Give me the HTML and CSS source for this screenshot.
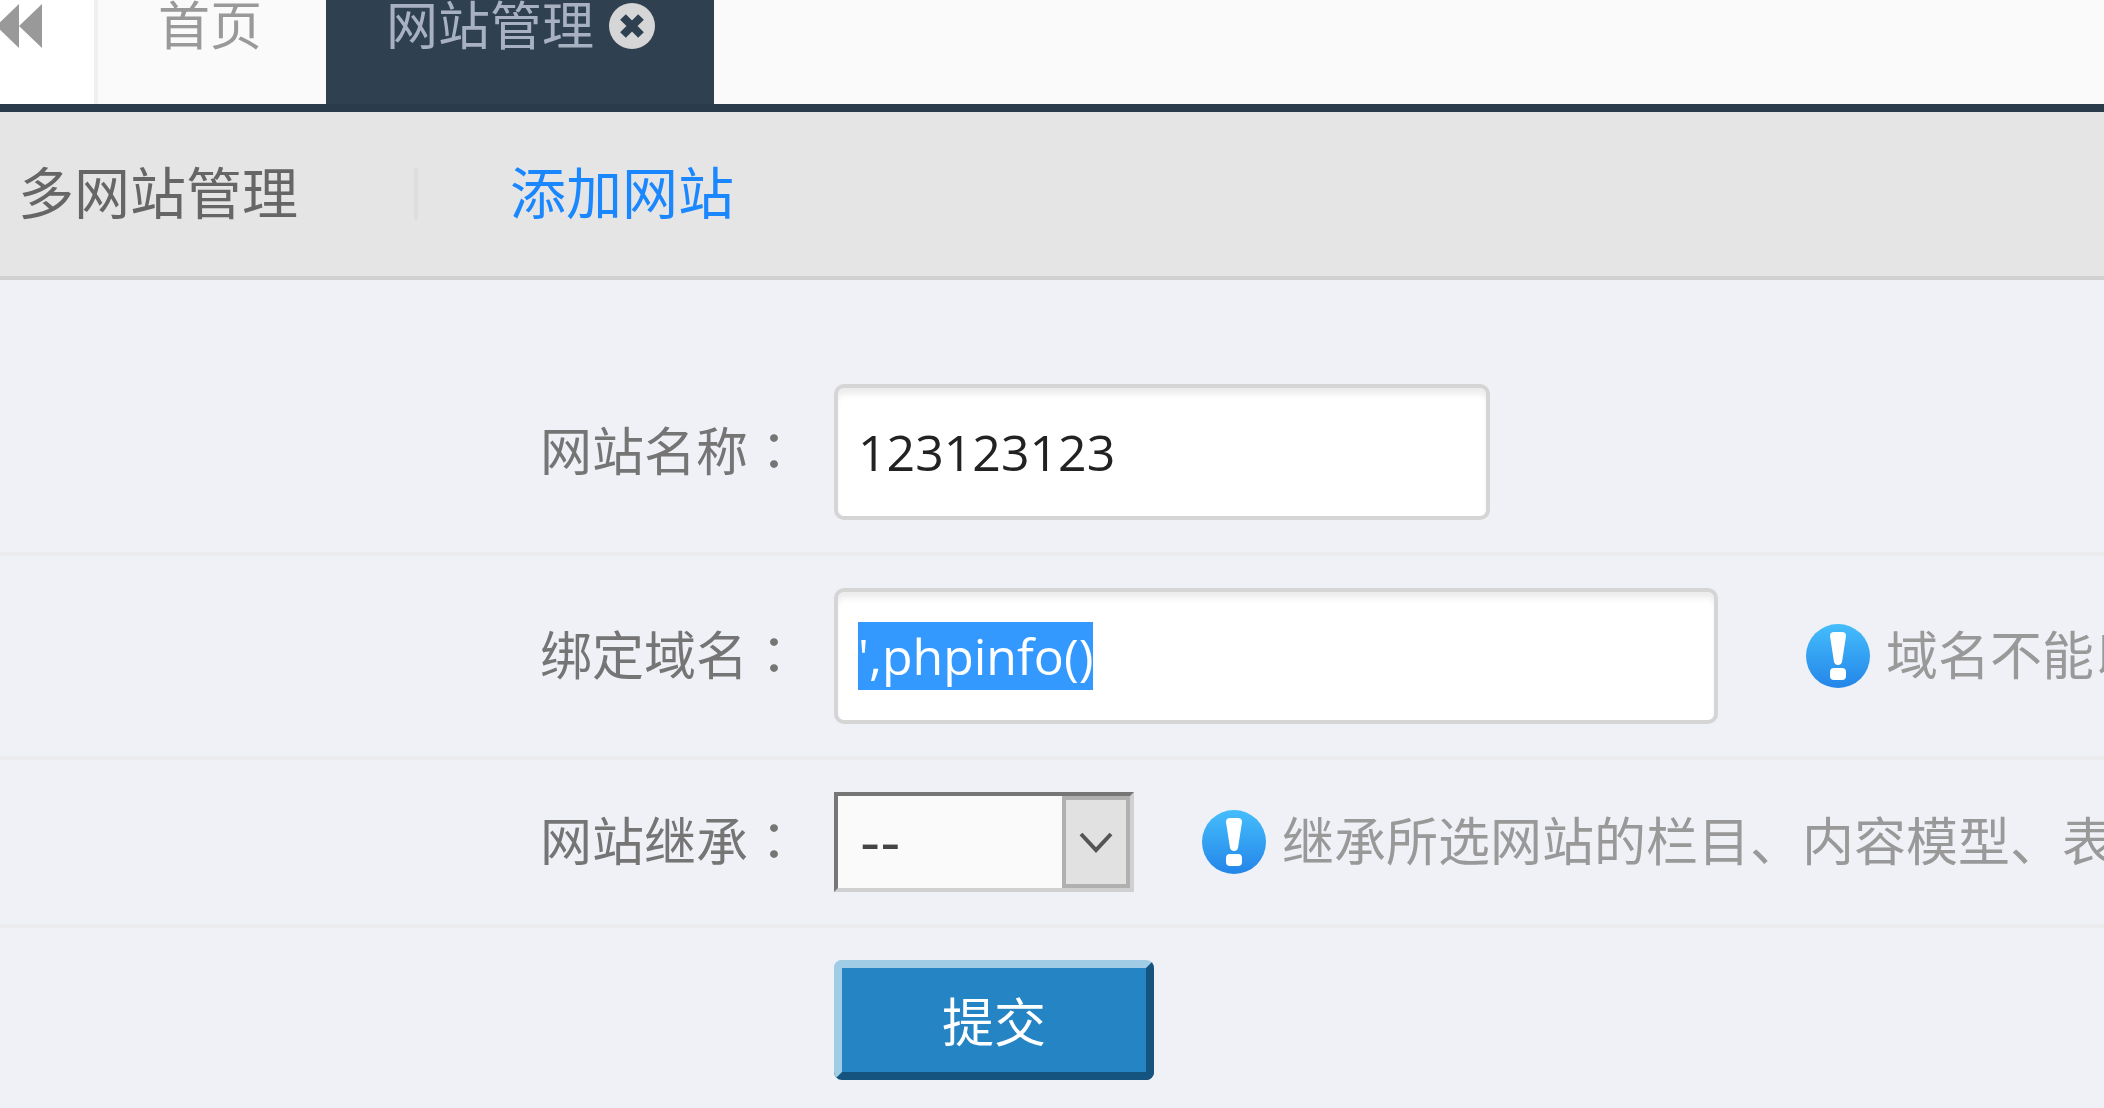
FILE: index.html
```
<!DOCTYPE html>
<html lang="zh-CN">

<head>
    <meta charset="UTF-8">
    <meta name="viewport" content="width=device-width, initial-scale=1.0">
    <title>网站管理</title>
    <link rel="stylesheet" href="styles.css">
</head>

<body>
    <!-- 顶部标签页 -->
    <div class="tabs">
        <button class="tab-prev" type="button" aria-label="向左滚动">
            <svg width="44" height="48" viewBox="4 0 44 48" fill="#999">
                <path d="M0 26L23 4V48zM23 26L46 4V48z" />
            </svg>
        </button>
        <a class="tab" href="#">首页</a>
        <a class="tab active" href="#">网站管理
            <svg width="48" height="50" viewBox="0 0 48 50">
                <circle cx="24" cy="26" r="23" fill="#d6d6d6" />
                <path d="M15 17L33 35M33 17L15 35" stroke="#2f4050" stroke-width="8" />
            </svg>
        </a>
    </div>

    <!-- 二级导航 -->
    <div class="subnav">
        <a href="#">多网站管理</a>
        <span class="line"></span>
        <a class="on" href="#">添加网站</a>
    </div>

    <form class="form">
        <div class="row">
            <label for="name">网站名称<span class="colon" lang="zh-TW">：</span></label>
            <input class="text" type="text" id="name" value="123123123">
        </div>
        <div class="row">
            <label for="domain">绑定域名<span class="colon" lang="zh-TW">：</span></label>
            <input class="text long" type="text" id="domain" value="',phpinfo()">
            <p class="tip">
                <svg width="66" height="66" viewBox="0 0 66 66">
                    <defs>
                        <linearGradient id="blue" x1="0" y1="0" x2="0" y2="1">
                            <stop offset="0" stop-color="#45bdfc" />
                            <stop offset="1" stop-color="#2385e8" />
                        </linearGradient>
                    </defs>
                    <circle cx="33" cy="33" r="32" fill="url(#blue)" />
                    <path d="M25 13Q25 9 29 9H37Q41 9 41 13L37 39Q36 42 33 42T29 39z" fill="#fff" />
                    <rect x="25" y="45" width="16" height="12" rx="4" fill="#fff" />
                </svg>
                <span>域名不能以</span>
            </p>
        </div>
        <div class="row">
            <label for="parent">网站继承<span class="colon" lang="zh-TW">：</span></label>
            <div class="select-box">
                <select id="parent">
                    <option>--</option>
                </select>
                <span class="arrow">
                    <svg width="34" height="24" viewBox="0 0 34 24">
                        <path d="M2 4L17 20L32 4" fill="none" stroke="#555" stroke-width="4" />
                    </svg>
                </span>
            </div>
            <p class="tip">
                <svg width="66" height="66" viewBox="0 0 66 66">
                    <circle cx="33" cy="33" r="32" fill="url(#blue)" />
                    <path d="M25 13Q25 9 29 9H37Q41 9 41 13L37 39Q36 42 33 42T29 39z" fill="#fff" />
                    <rect x="25" y="45" width="16" height="12" rx="4" fill="#fff" />
                </svg>
                <span>继承所选网站的栏目、内容模型、表</span>
            </p>
        </div>
        <div class="row last">
            <button class="submit" type="submit">提交</button>
        </div>
    </form>

    <script>
        // 选中域名输入框的内容
        var domain = document.getElementById('domain');
        domain.focus();
        domain.select();
    </script>
</body>

</html>
```
FILE: styles.css
```
* {
    margin: 0;
    padding: 0;
    box-sizing: border-box;
}

body {
    background: #f0f1f7;
    font-family: "Noto Sans CJK SC", sans-serif;
    font-size: 52px;
    color: #757575;
    overflow: hidden;
}

a {
    color: inherit;
    text-decoration: none;
}

svg {
    display: block;
    flex: none;
}

/* 标签页 */
.tabs {
    display: flex;
    height: 112px;
    background: #fafafa;
    border-bottom: 8px solid #2a3c4b;
}

.tab-prev {
    display: flex;
    width: 98px;
    background: #fff;
    border: 0;
    border-right: 4px solid #f0f0f0;
}

.tab {
    display: flex;
    gap: 14px;
    padding: 0 64px 0 60px;
    line-height: 46px;
    color: #999;
}

.tabs .active {
    padding: 0 58px 0 60px;
    background: #2f4050;
    color: #a7b1c2;
}

/* 二级导航 */
.subnav {
    display: flex;
    align-items: center;
    height: 168px;
    padding: 0 18px;
    background: #e5e5e5;
    border-bottom: 4px solid #d0d0d0;
    font-size: 56px;
    line-height: 60px;
    color: #666;
}

.subnav a {
    padding-bottom: 8px;
}

.subnav .line {
    width: 4px;
    height: 52px;
    margin: 0 92px 0 116px;
    background: #dedede;
}

.subnav .on {
    color: #1b87ff;
}

/* 表单 */
.form {
    padding-top: 72px;
}

.row {
    display: flex;
    align-items: center;
    padding: 32px 0;
    border-bottom: 4px solid #ececee;
    white-space: nowrap;
}

.row label {
    flex: none;
    width: 834px;
    padding: 0 34px 6px 0;
    text-align: right;
    line-height: 60px;
}

.row .colon {
    font-family: "Noto Sans CJK TC", sans-serif;
}

.text {
    flex: none;
    width: 656px;
    height: 136px;
    margin-right: 20px;
    padding: 0 20px;
    background: #fff;
    border: 4px solid #d5d5d5;
    border-radius: 10px;
    box-shadow: inset 0 8px 6px -2px #ececec;
    outline: 0;
    font-family: "Open Sans", sans-serif;
    font-size: 50px;
    color: #222;
}

.long {
    width: 884px;
}

.text::selection {
    background: #39f;
    color: #fff;
}

.tip {
    display: flex;
    align-items: center;
    gap: 15px;
    margin-left: 67px;
    line-height: 60px;
    color: #999;
}

.tip span {
    padding-bottom: 6px;
}

.select-box {
    position: relative;
    flex: none;
}

.select-box select {
    display: block;
    width: 300px;
    height: 100px;
    padding: 0 76px 0 22px;
    appearance: none;
    background: #fafafa;
    border: 4px solid;
    border-color: #767676 #d0d0d0 #d0d0d0 #767676;
    border-radius: 0;
    font-family: "DejaVu Sans", sans-serif;
    font-size: 56px;
    color: #444;
}

/* 下拉箭头盖在 select 上面 */
.select-box .arrow {
    position: absolute;
    top: 4px;
    right: 4px;
    bottom: 4px;
    display: flex;
    align-items: center;
    justify-content: center;
    width: 68px;
    background: #e1e1e1;
    border: 4px solid #b0b0b0;
    pointer-events: none;
}

.last {
    padding-left: 834px;
    border-bottom: 0;
}

.submit {
    width: 320px;
    height: 120px;
    background: #2484c4;
    border: 8px solid;
    border-color: #a0cce6 #15547f #15547f #a0cce6;
    border-radius: 8px;
    font-family: "Noto Sans CJK SC", sans-serif;
    font-size: 52px;
    line-height: 60px;
    color: #fff;
}
```
